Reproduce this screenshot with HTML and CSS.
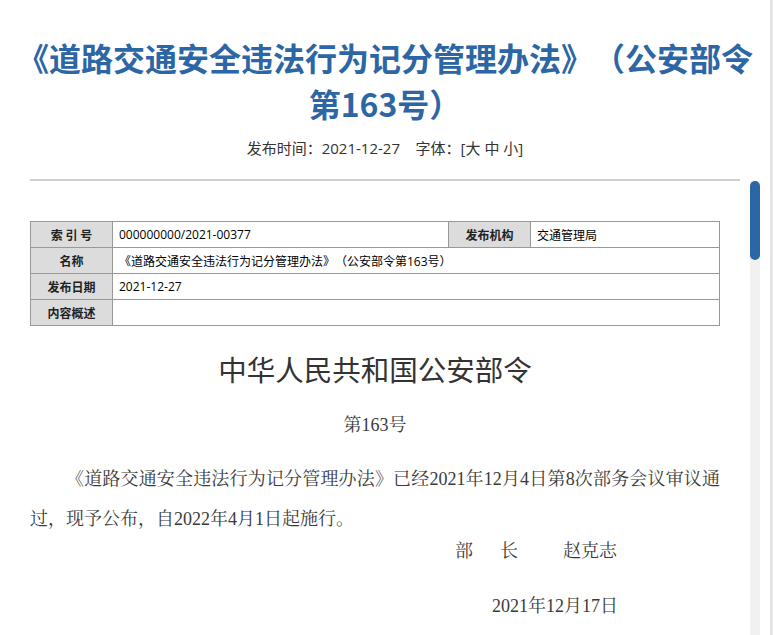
FILE: index.html
```html
<!DOCTYPE html>
<html lang="zh-CN">
<head>
<meta charset="utf-8">
<title>《道路交通安全违法行为记分管理办法》（公安部令第163号）</title>
<link rel="stylesheet" href="styles.css">
</head>
<body>
<div class="page">
    <div class="header">
        <h1 class="title">《道路交通安全违法行为记分管理办法》（公安部令第163号）</h1>
        <div class="meta">发布时间：2021-12-27&nbsp;&nbsp;&nbsp;&nbsp;字体：[<a href="#">大</a> <a href="#">中</a> <a href="#">小</a>]</div>
        <hr class="rule">
    </div>
    <div class="body">
        <div class="scroller">
            <div class="article">
                <table class="info">
                    <colgroup>
                        <col class="c-label">
                        <col class="c-wide">
                        <col class="c-label">
                        <col>
                    </colgroup>
                    <tr>
                        <th>索 引 号</th>
                        <td>000000000/2021-00377</td>
                        <th>发布机构</th>
                        <td>交通管理局</td>
                    </tr>
                    <tr>
                        <th>名称</th>
                        <td colspan="3">《道路交通安全违法行为记分管理办法》（公安部令第163号）</td>
                    </tr>
                    <tr>
                        <th>发布日期</th>
                        <td colspan="3">2021-12-27</td>
                    </tr>
                    <tr>
                        <th>内容概述</th>
                        <td colspan="3"></td>
                    </tr>
                </table>

                <h2 class="order">中华人民共和国公安部令</h2>
                <p class="num">第163号</p>
                <p class="lead">《道路交通安全违法行为记分管理办法》已经2021年12月4日第8次部务会议审议通过，现予公布，自2022年4月1日起施行。</p>
                <p class="sign">部&ensp;&ensp;&ensp;长&ensp;&ensp;&ensp;&ensp;&ensp;赵克志</p>
                <p class="date">2021年12月17日</p>
            </div>
        </div>
        <div class="scrollbar"><div class="thumb"></div></div>
    </div>
</div>
</body>
</html>
```

FILE: styles.css
```css
html, body {
    margin: 0;
    height: 100%;
    overflow: hidden;
    background: #fff;
}

.page {
    width: 770px;
    height: 635px;
    border-right: 3px solid #e6e6e6;
    display: flex;
    flex-direction: column;
    font-family: "Open Sans", "Noto Sans CJK SC", sans-serif;
    color: #333;
    text-spacing-trim: space-all;
}

.title {
    margin: 0;
    padding: 34px 10px 0;
    font-size: 32px;
    line-height: 46px;
    font-weight: bold;
    color: #2c66a4;
    text-align: center;
    font-family: "Noto Sans CJK SC", sans-serif;
}

.meta {
    margin-top: 11px;
    font-size: 15px;
    line-height: 22px;
    text-align: center;
}

.meta a {
    color: #333;
    text-decoration: none;
}

.rule {
    margin: 20px 30px 0;
    border: none;
    height: 2px;
    background: #cfcfcf;
}

/* content area + its own scrollbar */
.body {
    flex: 1;
    min-height: 0;
    display: flex;
    margin-left: 30px;
    width: 730px;
}

.scroller {
    flex: 1;
    overflow: hidden;
}

.scrollbar {
    width: 10px;
    background: #f1f1f1;
}

.thumb {
    height: 79px;
    background: #2c66a4;
    border-radius: 5px;
}

.article {
    padding: 40px 30px 0 0;
}

.info {
    width: 100%;
    border-collapse: collapse;
    font-size: 12px;
    color: #000;
}

.c-label {
    width: 82px;
}

.c-wide {
    width: 336px;
}

.info th,
.info td {
    height: 25px;
    padding: 0 6px;
    border: 1px solid #999;
    text-align: left;
}

.info th {
    background: #dcdcdc;
    text-align: center;
    font-weight: bold;
    color: #222;
    font-family: "Noto Sans CJK SC", sans-serif;
}

.order {
    margin: 24px 0 0;
    font-size: 28.5px;
    line-height: 40px;
    font-weight: normal;
    text-align: center;
    color: #333;
}

.num,
.lead,
.sign,
.date {
    font-family: "Liberation Serif", "Noto Serif CJK SC", "Noto Sans CJK SC", serif;
    font-size: 18px;
    color: #3a3a3a;
}

.num {
    margin: 15px 0 0;
    line-height: 40px;
    text-align: center;
}

.lead {
    margin: 14px 0 0;
    line-height: 40px;
    text-align: justify;
    text-indent: 2em;
}

.sign {
    margin: 0;
    line-height: 24px;
    text-align: right;
    padding-right: 103px;
}

.date {
    margin: 31px 0 0;
    line-height: 24px;
    text-align: right;
    padding-right: 102px;
}
```
